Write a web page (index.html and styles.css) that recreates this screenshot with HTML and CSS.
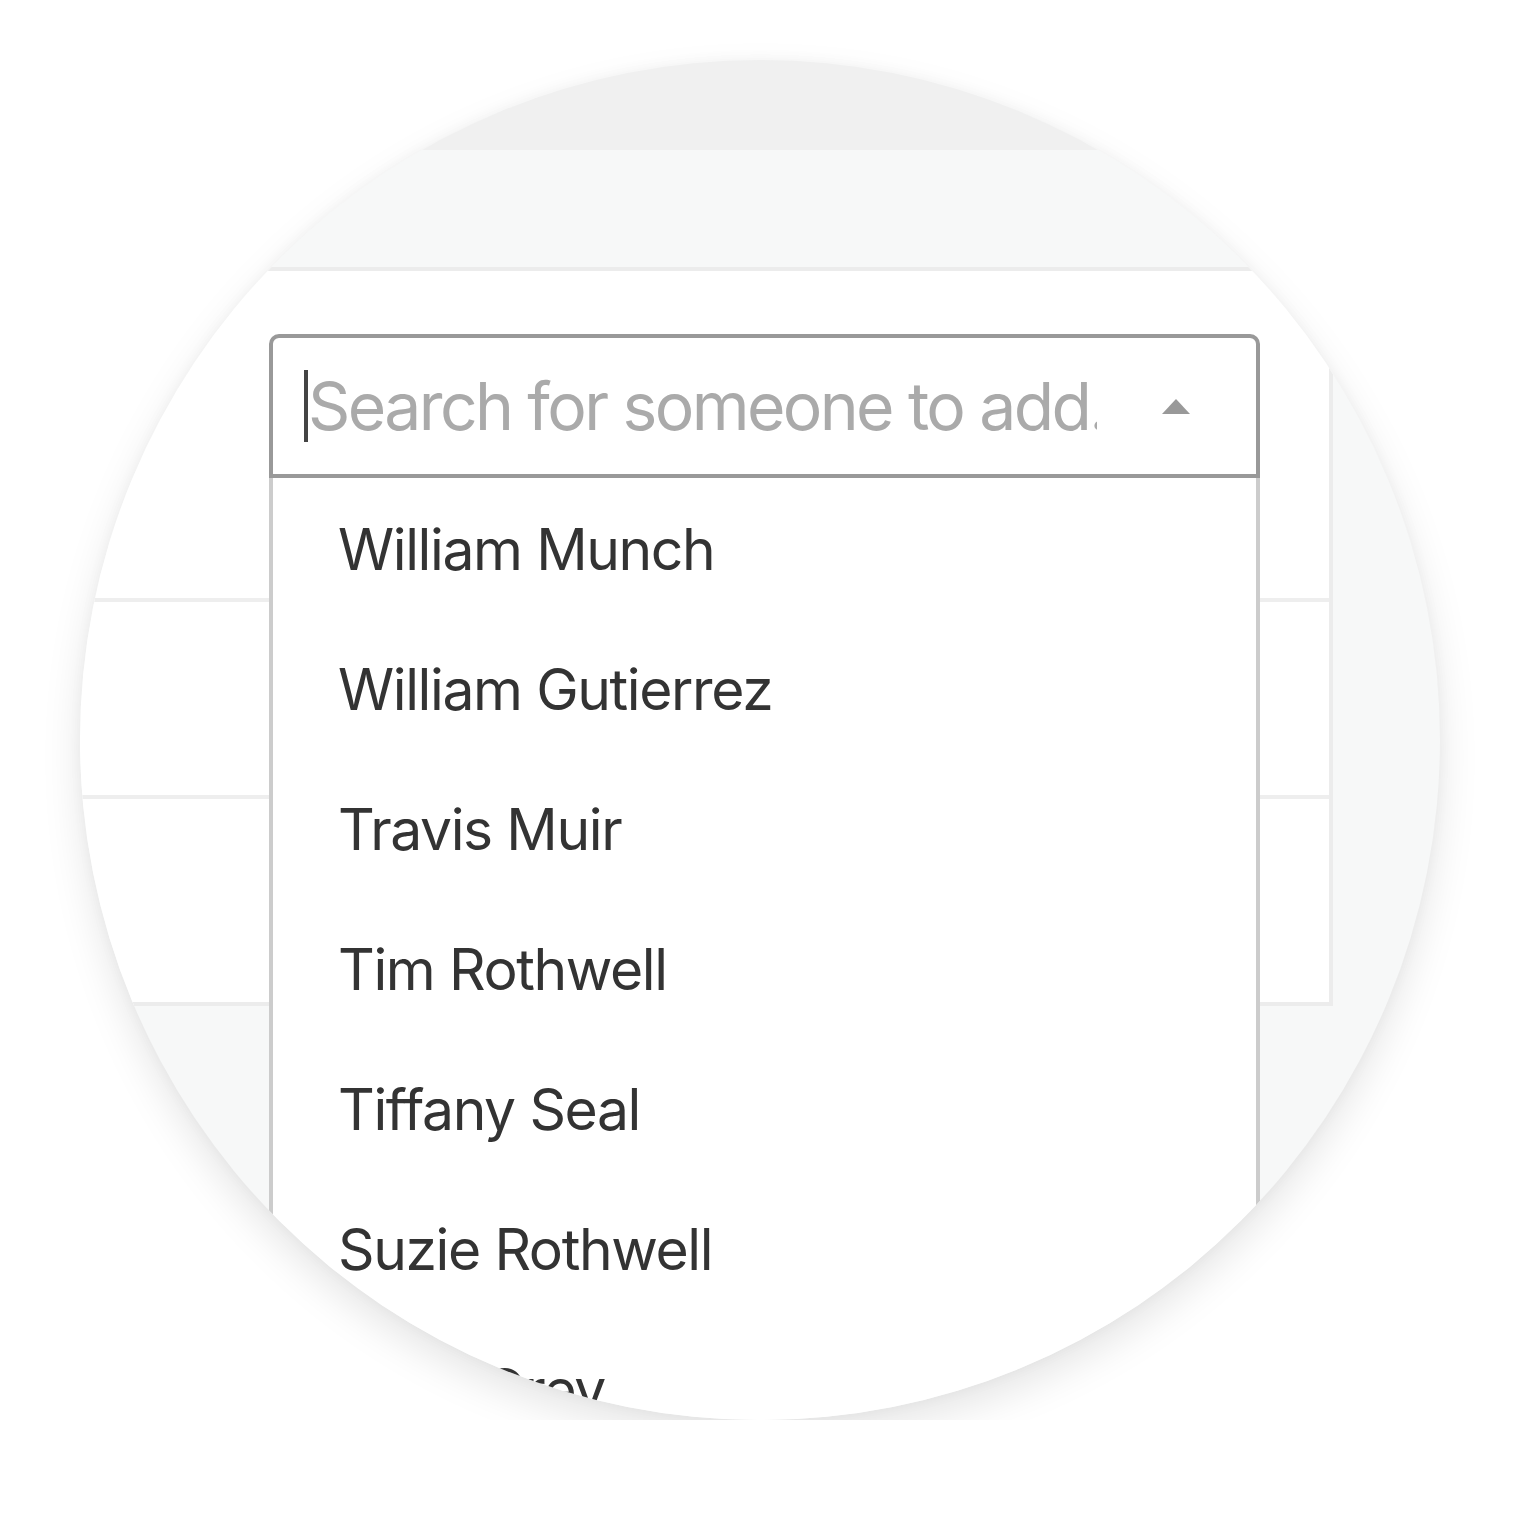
FILE: index.html
```html
<!DOCTYPE html>
<html>
<head>
<meta charset="utf-8">
<link rel="stylesheet" href="styles.css">
</head>
<body>
<div class="lens">
  <div class="topbar"></div>
  <div class="band"></div>
  <div class="card">
    <div class="row row-first"></div>
    <div class="row row-mid"></div>
    <div class="row row-last"></div>
    <div class="dropdown">
      <div class="control">
        <div class="field">
          <span class="cursor"></span>
          <span class="placeholder">Search for someone to add...</span>
        </div>
        <span class="arrow"></span>
      </div>
      <ul class="menu">
        <li>William Munch</li>
        <li>William Gutierrez</li>
        <li>Travis Muir</li>
        <li>Tim Rothwell</li>
        <li>Tiffany Seal</li>
        <li>Suzie Rothwell</li>
        <li>Ruby Grey</li>
      </ul>
    </div>
  </div>
</div>
</body>
</html>
```

FILE: styles.css
```css
html, body {
  margin: 0;
  padding: 0;
  background: #ffffff;
}

body {
  font-family: Inter, "Liberation Sans", sans-serif;
}

.lens {
  position: relative;
  margin: 60px 0 0 80px;
  width: 1360px;
  height: 1360px;
  border-radius: 50%;
  overflow: hidden;
  background: #f7f8f8;
  box-shadow: 0 18px 40px rgba(0, 0, 0, 0.10), 0 0 14px rgba(0, 0, 0, 0.04);
}

.topbar {
  height: 90px;
  background: #f0f0f0;
}

.band {
  height: 117px;
  background: #f7f8f8;
}

.card {
  position: relative;
  margin-left: -20px;
  width: 1265px;
  background: #ffffff;
  border: 4px solid #ececec;
}

.row {
  border-bottom: 4px solid #eeeeee;
}

.row-first { height: 327px; }
.row-mid { height: 193px; }
.row-last { height: 203px; border-bottom: none; }

.dropdown {
  position: absolute;
  left: 205px;
  top: 63px;
  width: 991px;
}

.control {
  box-sizing: border-box;
  height: 144px;
  border: 4px solid #999999;
  border-radius: 10px 10px 0 0;
  background: #ffffff;
  display: flex;
  align-items: center;
  padding-left: 31px;
}

.field {
  width: 793px;
  display: flex;
  align-items: center;
  overflow: hidden;
  white-space: nowrap;
}

.cursor {
  flex: none;
  width: 4px;
  height: 72px;
  background: #444444;
}

.placeholder {
  font-size: 66px;
  letter-spacing: -2.6px;
  color: #aaaaaa;
  line-height: 1;
}

.arrow {
  margin-left: 65px;
  width: 0;
  height: 0;
  border-left: 14px solid transparent;
  border-right: 14px solid transparent;
  border-bottom: 15px solid #999999;
}

.menu {
  list-style: none;
  margin: 0;
  padding: 2px 0 0 0;
  height: 1000px;
  background: #ffffff;
  border-left: 4px solid #cccccc;
  border-right: 4px solid #cccccc;
}

.menu li {
  height: 140px;
  line-height: 140px;
  padding-left: 65px;
  font-size: 57px;
  letter-spacing: -1.4px;
  color: #333333;
}
```
